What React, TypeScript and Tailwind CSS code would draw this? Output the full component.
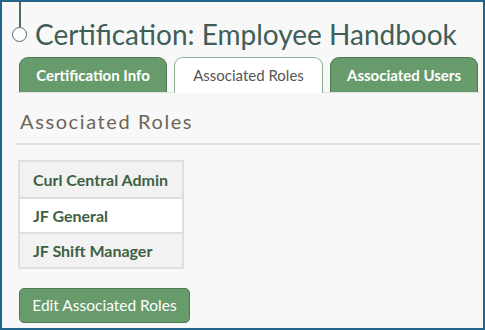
import React from 'react';

const roles = ['Curl Central Admin', 'JF General', 'JF Shift Manager'];

const tabs = [
    { label: 'Certification Info', active: false },
    { label: 'Associated Roles', active: true },
    { label: 'Associated Users', active: false },
];

export default function App() {
    return (
        <div
            className="w-[485px] h-[330px] border-2 border-[#23648a] bg-[#f8f8f8] overflow-hidden"
            style={{ fontFamily: 'Lato, "Noto Sans", sans-serif' }}
        >
            {/* Title */}
            <div className="flex items-start pl-[10px]">
                <div className="flex flex-col items-center w-[15px]">
                    <div className="w-[2px] h-[25px] bg-[#4f6e52]" />
                    <div className="w-[15px] h-[15px] rounded-full border-[1.5px] border-[#4d6a7c] bg-white" />
                </div>
                <h1 className="ml-[8px] mt-[15px] text-[28px] leading-[34px] text-[#3f5e58]">
                    Certification: Employee Handbook
                </h1>
            </div>

            {/* Tabs */}
            <div className="mt-[6px] ml-[14px] mr-[2px] flex gap-[7px] pl-[3px] border-b border-[#e4e4e4]">
                {tabs.map((t) => (
                    <div
                        key={t.label}
                        className={
                            t.active
                                ? 'w-[149px] h-[36px] rounded-t-[9px] border border-b-0 border-[#8fae93] bg-white text-[#555] flex items-center justify-center text-[15px] -mb-px'
                                : 'w-[148px] h-[35px] rounded-t-[9px] border border-b-0 border-[#4e7a53] bg-[#689b6c] text-white font-bold flex items-center justify-center text-[15px]'
                        }
                    >
                        {t.label}
                    </div>
                ))}
            </div>

            {/* Section heading */}
            <div className="ml-[14px] mr-[2px] border-b-2 border-[#e3e3e3] pt-[15px] pb-[9px] pl-[4px]">
                <h2 className="text-[20px] leading-[26px] tracking-[1.6px] text-[#6d6556]">Associated Roles</h2>
            </div>

            {/* Roles table */}
            <div className="ml-[16px] mt-[15px] w-[166px] border-2 border-[#dedede]">
                {roles.map((r, i) => (
                    <div
                        key={r}
                        className={
                            'h-[35px] flex items-center pl-[13px] text-[16px] font-bold text-[#3d6142] ' +
                            (i % 2 === 1 ? 'bg-white' : 'bg-[#f2f2f2]') +
                            (i > 0 ? ' border-t-2 border-[#dedede]' : '')
                        }
                    >
                        {r}
                    </div>
                ))}
            </div>

            {/* Action */}
            <button className="ml-[17px] mt-[19px] w-[171px] h-[35px] rounded-[5px] border border-[#4e7a53] bg-[#689b6c] text-white text-[15.5px]">
                Edit Associated Roles
            </button>
        </div>
    );
}
